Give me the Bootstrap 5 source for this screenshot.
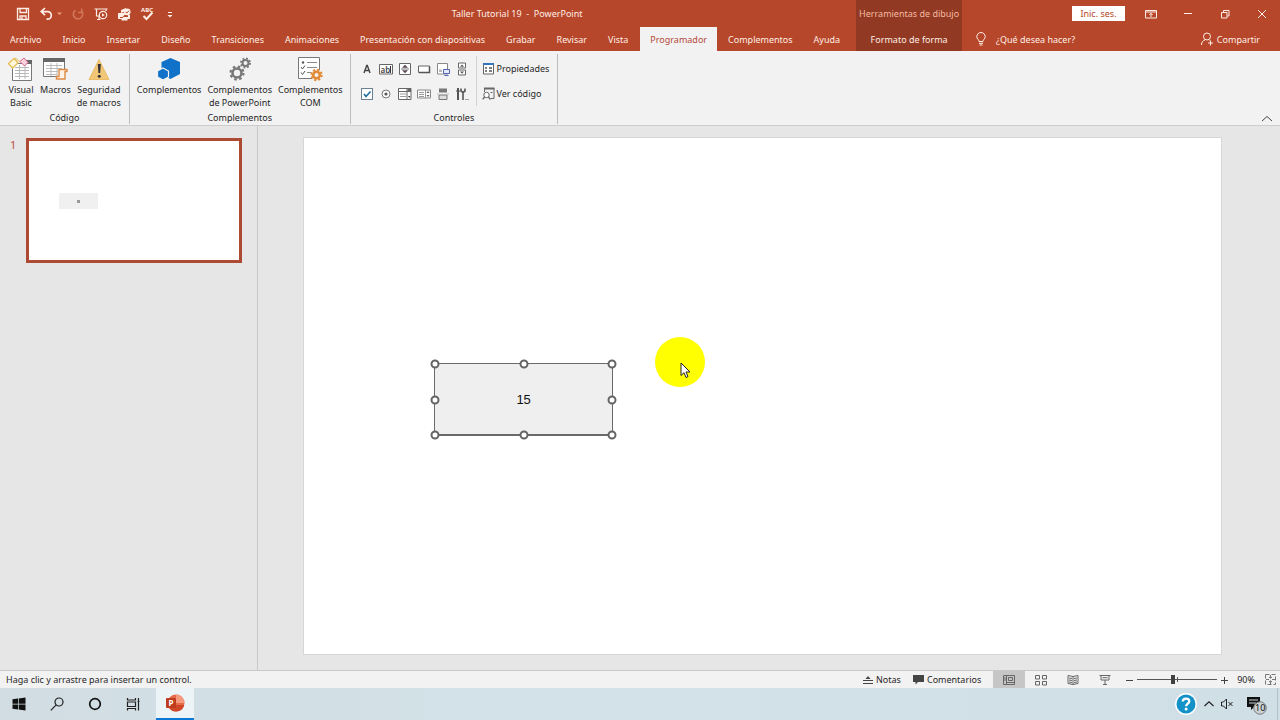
<!DOCTYPE html>
<html lang="es">
<head>
<meta charset="utf-8">
<meta name="viewport" content="width=device-width, initial-scale=1">
<title>Taller Tutorial 19 - PowerPoint</title>
<link href="https://cdn.jsdelivr.net/npm/bootstrap@5.3.0/dist/css/bootstrap.min.css" rel="stylesheet">
<style>
  :root { --brand: #b7472a; --brand-dark: #923923; --panel: #f2f2f2; --desk: #e6e6e6; }
  body { font-family: "Noto Sans", "Open Sans", sans-serif; font-size: 9px; line-height: 13px; color: #262626; background: var(--desk); }
  button, a { font: inherit; line-height: 13px; color: inherit; text-decoration: none; white-space: nowrap; }
  button { border: 0; background: none; padding: 0; }
  svg { display: block; flex: none; }

  .app-head { background: var(--brand); color: #ffeee6; display: grid; grid-template-columns: auto 106px 1fr; grid-template-rows: 27px 24px; }
  .quick-bar { flex: 0 0 178px; gap: 9px; padding-left: 16px; }
  .context-part { background: var(--brand-dark); display: flex; align-items: center; justify-content: center; white-space: nowrap; }
  .context-title { color: #f4b9a2; }
  .sign-in { background: #fff; color: var(--brand); width: 53px; height: 15px; margin-right: 20px; }
  .window-btns { gap: 25px; padding-right: 12px; }
  .tab-row { padding-right: 5px; }
  .ribbon-tab { padding: 0 11px 0 10px; display: flex; align-items: center; }
  .ribbon-tab.is-open { background: var(--panel); color: #b5493a; padding: 0 10px; margin: 0 1px; }

  .ribbon { background: var(--panel); border-bottom: 1px solid #cdcdcd; height: 75px; padding: 3px 0 1px; }
  .ribbon-group { border-right: 1px solid #bcbcbc; display: flex; flex-direction: column; justify-content: space-between; align-items: center; }
  .big-btns { display: flex; align-items: flex-start; gap: 6px; padding: 1px 8px 0; }
  .ribbon-group + .ribbon-group .big-btns { padding: 1px 7px 0; }
  .big-btn { display: flex; flex-direction: column; align-items: center; }
  .controls-row { padding: 2px 8px 0 7px; }
  .control-grid { display: grid; grid-template-columns: repeat(6, 19px); grid-auto-rows: 25px; place-items: center; }
  .control-grid svg, .control-grid label { width: 14px; height: 14px; }
  .check-box { appearance: none; display: block; width: 12px; height: 12px; margin: 1px; border: 1px solid #6b8090; background: #fff; }
  .check-box:checked { background: #fff url("data:image/svg+xml,%3Csvg xmlns='http://www.w3.org/2000/svg' viewBox='0 0 10 10'%3E%3Cpath d='M2 5l2 2.5L8.5 2.5' fill='none' stroke='%231e6ea6' stroke-width='1.6'/%3E%3C/svg%3E") center/10px no-repeat; }
  .side-btns { border-left: 1px solid #d2d2d2; padding-left: 5px; }
  .side-btn { height: 25px; display: flex; align-items: center; gap: 2px; }

  .thumb-pane { width: 258px; border-right: 1px solid #c9c9c9; padding: 12px 15px 12px 10px; gap: 10px; }
  .thumb-num { color: #c0513a; font-size: 11px; }
  .thumb { flex: 1; aspect-ratio: 216 / 125; border: 3px solid #ac4a33; background: #fff; }
  .thumb-shape { left: 14%; top: 44%; width: 19%; height: 13%; background: #f0f0f0; display: grid; place-items: center; }
  .thumb-shape::after { content: ""; width: 3px; height: 3px; background: #999; }
  .slide-pane { padding: 11px 58px 15px 45px; }
  .slide { aspect-ratio: 919 / 518; background: #fff; border: 1px solid #d6d6d6; }
  .shape { left: 14.2%; top: 43.7%; width: 19.5%; height: 14%; background: #efefef; border: 1px solid #6a6a6a; box-shadow: inset 0 -1px #6a6a6a; color: #111; font: 13px/16px "Liberation Sans", Arial, sans-serif; }
  .grip { width: 9px; height: 9px; border: 2px solid #646464; border-radius: 50%; background: #fff; transform: translate(-50%, -50%); }
  .pointer-halo { left: 38.3%; top: 38.6%; width: 50px; height: 50px; border-radius: 50%; background: #ffff00; }
  .pointer-halo svg { position: absolute; left: 25px; top: 25px; }

  .status { height: 18px; background: var(--panel); border-top: 1px solid #c8c8c8; padding-left: 6px; }
  .status-btn { display: flex; align-items: center; gap: 3px; }
  .status-notes { margin-right: 12px; }
  .view-btn { width: 32px; height: 17px; display: grid; place-items: center; color: #666; }
  .view-btn.is-on { background: #c6c6c6; }
  .zoom-range { appearance: none; display: block; width: 80px; height: 11px; margin: 0; background: linear-gradient(#555, #555) center/100% 1px no-repeat, linear-gradient(#555, #555) center/1px 5px no-repeat; }
  .zoom-range::-webkit-slider-thumb { appearance: none; width: 4px; height: 9px; background: #404040; }
  .zoom-range::-moz-range-thumb { width: 4px; height: 9px; border: 0; border-radius: 0; background: #404040; }
  .zoom-value { margin-right: 10px; }

  .taskbar { height: 32px; background: linear-gradient(90deg, #d1dde2, #d3e2e9 45%, #d0dee5); color: #111; }
  .task-btn { width: 38px; height: 32px; display: grid; place-items: center; }
  .task-btn.is-on { background: #edf4f8; border-bottom: 2px solid #0a78d6; }
  .tray { gap: 7px; padding-right: 9px; margin-right: 2px; border-right: 1px solid #b4c1c8; height: 32px; }
  .tray-sound { margin-right: 6px; }
</style>
</head>
<body class="d-flex flex-column min-vh-100">

<header class="app-head">
  <div class="d-flex align-items-center">
    <div class="quick-bar d-flex align-items-center">
      <button type="button" aria-label="Guardar"><svg width="14" height="14" viewBox="0 0 14 14" fill="none" stroke="#ffeee6" stroke-width="1.3"><path d="M1.500 1.500h11v11h-11zM4 1.500v4h6.500v-4M4 12.500V9h6v3.500M6 12V10"/></svg></button>
      <button type="button" class="d-flex align-items-center gap-1" aria-label="Deshacer"><svg width="14" height="14" viewBox="0 0 14 14" fill="none" stroke="#ffeee6" stroke-width="1.7"><path d="M6 1L2.200 4.600 6 8.200M2.500 4.600H8.500a3.500 3.500 0 010 7.600H7.500"/></svg><svg width="5" height="4" viewBox="0 0 5 4"><path d="M0 .5h5L2.500 3z" fill="#ef9d7c"/></svg></button>
      <button type="button" aria-label="Repetir"><svg width="14" height="14" viewBox="0 0 14 14" fill="none" stroke="#cf735a" stroke-width="1.7"><path d="M4.500 3.200A4.700 4.700 0 1010 3.500M7 5.500h3.700V1.500"/></svg></button>
      <button type="button" aria-label="Presentación desde el principio"><svg width="14" height="14" viewBox="0 0 14 14" fill="none" stroke="#ffeee6" stroke-width="1.2"><path d="M.5 2h13M2.500 2v7h2.500M5 9v3.500M3 12.500h3.500M12 2v2"/><circle cx="9" cy="8" r="3.7"/><path d="M8 6.300v3.400L10.700 8z" fill="#ffeee6" stroke="none"/></svg></button>
      <button type="button" aria-label="Impresión rápida"><svg width="14" height="14" viewBox="0 0 14 14" fill="#ffeee6"><path d="M4 6V3l5-2v3zM1 6h7v1.500L5.500 10H11V8h2v4h-2.500v1.500h-6V12H1z"/><circle cx="10.2" cy="4.8" r="3.4"/><path d="M8.600 4.800l1.200 1.300 2.200-2.400" fill="none" stroke="#b7472a"/><path d="M3 10.500h3" stroke="#b7472a"/></svg></button>
      <button type="button" aria-label="Ortografía"><svg width="14" height="14" viewBox="0 0 14 14" fill="none" stroke="#ffeee6"><path d="M3.500 9l3 3 6-6.500" stroke-width="2"/><text x="1" y="5" font-size="6" font-weight="700" fill="#ffeee6" stroke="none">ABC</text></svg></button>
      <button type="button" aria-label="Personalizar barra"><svg width="14" height="14" viewBox="0 0 14 14"><path d="M5 5.500h4" stroke="#ffeee6"/><path d="M4.500 8h5L7 10.500z" fill="#ffeee6"/></svg></button>
    </div>
    <div class="flex-grow-1 text-center text-nowrap">Taller Tutorial 19&nbsp; -&nbsp; PowerPoint</div>
  </div>
  <div class="context-part context-title">Herramientas de dibujo</div>
  <div class="d-flex align-items-center justify-content-end">
    <button type="button" class="sign-in">Inic. ses.</button>
    <div class="window-btns d-flex align-items-center">
      <button type="button" aria-label="Opciones de la cinta"><svg width="12" height="12" viewBox="0 0 12 12" fill="none" stroke="#ffeee6"><path d="M.5 2.500h11v7.500h-11zM.5 4h11M6 9V5.500M4.300 7L6 5.300 7.700 7"/></svg></button>
      <button type="button" aria-label="Minimizar"><svg width="12" height="12" viewBox="0 0 12 12"><path d="M2 5.500h8" stroke="#ffeee6"/></svg></button>
      <button type="button" aria-label="Restaurar"><svg width="12" height="12" viewBox="0 0 12 12" fill="none" stroke="#ffeee6"><path d="M2.500 4.500h5.500v5.500h-5.500zM4.500 4V2.500h5.500V8H8.500"/></svg></button>
      <button type="button" aria-label="Cerrar"><svg width="12" height="12" viewBox="0 0 12 12" stroke="#ffeee6"><path d="M2 2l8 8M10 2l-8 8"/></svg></button>
    </div>
  </div>
  <nav class="tab-row d-flex">
    <a href="#" class="ribbon-tab">Archivo</a>
    <a href="#" class="ribbon-tab">Inicio</a>
    <a href="#" class="ribbon-tab">Insertar</a>
    <a href="#" class="ribbon-tab">Diseño</a>
    <a href="#" class="ribbon-tab">Transiciones</a>
    <a href="#" class="ribbon-tab">Animaciones</a>
    <a href="#" class="ribbon-tab">Presentación con diapositivas</a>
    <a href="#" class="ribbon-tab">Grabar</a>
    <a href="#" class="ribbon-tab">Revisar</a>
    <a href="#" class="ribbon-tab">Vista</a>
    <a href="#" class="ribbon-tab is-open" aria-current="page">Programador</a>
    <a href="#" class="ribbon-tab">Complementos</a>
    <a href="#" class="ribbon-tab">Ayuda</a>
  </nav>
  <a href="#" class="context-part">Formato de forma</a>
  <div class="d-flex justify-content-between">
    <button type="button" class="d-flex align-items-center ps-2 ms-1 gap-2"><svg width="14" height="14" viewBox="0 0 14 14" fill="none" stroke="#ffeee6"><path d="M5 9.500C5 7.500 2.800 7 2.800 4.700a4.200 4.200 0 018.400 0C11.200 7 9 7.500 9 9.500zM5 11.300h4M5.500 13h3"/></svg>¿Qué desea hacer?</button>
    <button type="button" class="d-flex align-items-center me-3 pe-1 gap-1"><svg width="12" height="14" viewBox="0 0 12 14" fill="none" stroke="#ffeee6"><circle cx="6" cy="4.5" r="3.5"/><path d="M.5 13c0-3 1.500-4.500 3.500-5M7.500 7.700l1 .8M9.500 8.500v5M7 11h5"/></svg>Compartir</button>
  </div>
</header>

<section class="ribbon d-flex" aria-label="Programador">
  <div class="ribbon-group">
    <div class="big-btns">
      <button type="button" class="big-btn"><svg width="26" height="28" viewBox="0 0 26 28"><path d="M4.500 8.500h19v17h-19z" fill="#fff" stroke="#777"/><path d="M16 5h8v4h-8z" fill="#666"/><path d="M7 12.500h14M7 15.500h14M7 18.500h14M7 21.500h14M11.500 10v14M17 10v14" stroke="#b8b8b8"/><path d="M.5 8.500l5.500-5 4 4.500-5.500 5z" fill="#fff7dd" stroke="#e5bd55" stroke-width="1.3"/><path d="M12 6.500l4-3.500 4 4.500-3.500 3.500z" fill="#f8d4df" stroke="#d8648a"/><path d="M7 3l5 3.500" stroke="#e5bd55"/></svg><span>Visual<br>Basic</span></button>
      <button type="button" class="big-btn"><svg width="26" height="28" viewBox="0 0 26 28"><path d="M1.500 3.500h21v18h-21z" fill="#fff" stroke="#777"/><path d="M1 3h22v4H1z" fill="#666"/><path d="M4 10.500h16M4 13.500h16M4 16.500h12M4 19.500h11M9 8v13M15 8v13" stroke="#bbb"/><path d="M17 14.500h8v2h-2V24h-8.500v-2.500H17z" fill="#fff2e6" stroke="#df8b45" stroke-width="1.4"/></svg><span>Macros</span></button>
      <button type="button" class="big-btn"><svg width="26" height="28" viewBox="0 0 26 28"><path d="M13 4.500L23 24.500H3z" fill="#f1c777" stroke="#e9bd69" stroke-linejoin="round"/><path d="M11.800 9h3l-.6 9h-1.800z" fill="#333"/><circle cx="13.3" cy="21.3" r="1.5" fill="#333"/></svg><span>Seguridad<br>de macros</span></button>
    </div>
    <div>Código</div>
  </div>
  <div class="ribbon-group">
    <div class="big-btns">
      <button type="button" class="big-btn"><svg width="26" height="28" viewBox="0 0 26 28" fill="#0f72c8"><path d="M14.500 3l9.500 4v12l-9.500 5-9-5V7z"/><path d="M7 13l5.500 3v6L7 25l-5.500-3v-6z" stroke="#f2f2f2" stroke-width="1.2"/></svg><span>Complementos</span></button>
      <button type="button" class="big-btn"><svg width="26" height="28" viewBox="0 0 26 28" fill="none" stroke="#787878"><circle cx="10" cy="18" r="4.5" stroke-width="2.6"/><circle cx="10" cy="18" r="6.5" stroke-width="2.2" stroke-dasharray="2.550 2.550"/><circle cx="18.500" cy="8" r="3" stroke-width="2"/><circle cx="18.500" cy="8" r="4.600" stroke-width="1.800" stroke-dasharray="1.800 1.810"/></svg><span>Complementos<br>de PowerPoint</span></button>
      <button type="button" class="big-btn"><svg width="26" height="28" viewBox="0 0 26 28" fill="none"><path d="M1.500 2.500h21v21h-21z" fill="#fff" stroke="#777"/><path d="M10 7.500h10M10 12.500h10M10 17.500h5" stroke="#888"/><circle cx="6" cy="7.5" r="1.2" fill="#555"/><path d="M4 12l1.500 2L8 10.500M4 17.500l1.500 2L8 16" stroke="#555"/><circle cx="19.5" cy="20" r="5.8" fill="#f2f2f2"/><circle cx="19.5" cy="20" r="3.3" stroke="#e38a35" stroke-width="2.6"/><circle cx="19.5" cy="20" r="5.2" stroke="#e38a35" stroke-width="2" stroke-dasharray="2.100 1.980"/></svg><span>Complementos<br>COM</span></button>
    </div>
    <div>Complementos</div>
  </div>
  <div class="ribbon-group">
    <div class="controls-row d-flex">
      <div class="control-grid pe-1">
        <button type="button" aria-label="Etiqueta"><svg viewBox="0 0 14 14" fill="none" stroke="#444" stroke-width="1.4"><path d="M4 11L6.700 3.500h.6L10 11M5 8.500h4"/></svg></button>
        <button type="button" aria-label="Cuadro de texto"><svg viewBox="0 0 14 14"><path d="M.5 2.500h13v9.500H.5z" fill="#fff" stroke="#666"/><text x="1.5" y="10.5" font-size="8" font-weight="600" fill="#444">ab</text><path d="M11.500 4v7" stroke="#333"/></svg></button>
        <button type="button" aria-label="Botón de número"><svg viewBox="0 0 14 14"><path d="M1.500 1.500h11v11h-11z" fill="#fff" stroke="#666"/><path d="M3 7h8" stroke="#777"/><path d="M4 5.800h6L7 2.700zM4 8.200h6L7 11.300z" fill="#5b4a58"/></svg></button>
        <button type="button" aria-label="Botón de comando"><svg viewBox="0 0 14 14"><path d="M1.500 4h11v6.500h-11z" fill="#fff" stroke="#666"/><path d="M2 10.500h10.500V4.500" fill="none" stroke="#555" stroke-width="1.5"/></svg></button>
        <button type="button" aria-label="Imagen"><svg viewBox="0 0 14 14"><path d="M1.500 1.500h10v10.500h-10z" fill="#fff" stroke="#888"/><path d="M3 10V7.500h3V10z" fill="#bbb"/><path d="M7.500 7.500h6v4h-6z" fill="#e4ebff" stroke="#5265b5"/><path d="M8.500 13.500h4" stroke="#5265b5"/></svg></button>
        <button type="button" aria-label="Barra de desplazamiento"><svg viewBox="0 0 14 14"><path d="M3.500 1h7v5h-7zM3.500 8h7v5h-7z" fill="#fff" stroke="#666"/><path d="M5 4.800h4L7 2.500zM5 9.500h4L7 11.800z" fill="#555"/></svg></button>
        <label aria-label="Casilla"><input type="checkbox" class="check-box" aria-label="Casilla" checked></label>
        <button type="button" aria-label="Botón de opción"><svg viewBox="0 0 14 14"><circle cx="7" cy="7" r="4" fill="#fff" stroke="#777"/><circle cx="7" cy="7" r="1.6" fill="#555"/></svg></button>
        <button type="button" aria-label="Cuadro combinado"><svg viewBox="0 0 14 14"><path d="M.5 1.500h12.500v11H.5z" fill="#fff" stroke="#666"/><path d="M9 1.500v11M1 4.500h12" stroke="#666"/><path d="M2 7h6M2 9.500h6" stroke="#999"/><path d="M9.500 2h3.500v3H9.500z" fill="#666"/><path d="M10 9h2.500L11.200 11z" fill="#444"/></svg></button>
        <button type="button" aria-label="Cuadro de lista"><svg viewBox="0 0 14 14"><path d="M.5 3h13v8H.5z" fill="#fff" stroke="#888"/><path d="M8.500 3v8M2 5.500h5M2 7.500h5M2 9.500h5" stroke="#999"/><path d="M9.500 6h3L11 4zM9.500 8h3L11 10z" fill="#666"/></svg></button>
        <button type="button" aria-label="Botón de alternar"><svg viewBox="0 0 14 14"><path d="M3 1.500h8v4H3z" fill="#777"/><path d="M3 8h8v4.500H3z" fill="#ddd" stroke="#777"/><path d="M1.500 7h1M11.500 7h1" stroke="#888"/></svg></button>
        <button type="button" aria-label="Más controles"><svg viewBox="0 0 14 14" fill="none" stroke="#555"><path d="M3 1v5M3 6v7" stroke-width="2"/><path d="M1 4h4"/><path d="M6 1.500v2.500l2 1.500 2-1.500V1.500M8 5.500V13" stroke-width="1.6"/><path d="M10.500 12.500h3" stroke-dasharray="1 1"/></svg></button>
      </div>
      <div class="side-btns">
        <button type="button" class="side-btn"><svg width="13" height="13" viewBox="0 0 13 13"><path d="M1.500 1.500h10v10.500h-10z" fill="#fff" stroke="#666"/><path d="M1 1h11v2H1z" fill="#3375b5"/><path d="M3 6h2M3 9h2M7 6h3M7 9h3" stroke="#555" stroke-width="1.3"/></svg>Propiedades</button>
        <button type="button" class="side-btn"><svg width="13" height="13" viewBox="0 0 13 13" fill="none" stroke="#666"><path d="M2.500 5V1.500h9.500v10H9"/><path d="M2 1.500h10.500" stroke-width="2"/><circle cx="4.5" cy="8" r="2.7" fill="#fff"/><path d="M2.700 10L.7 12.300M6.500 10l2 2.500" stroke-width="1.3"/><path d="M8.500 5.500h2"/></svg>Ver código</button>
      </div>
    </div>
    <div>Controles</div>
  </div>
  <button type="button" class="ms-auto align-self-end me-2" aria-label="Contraer la cinta"><svg width="10" height="10" viewBox="0 0 10 10" fill="none" stroke="#444"><path d="M0 7l5-4.500L10 7"/></svg></button>
</section>

<main class="d-flex flex-grow-1">
  <aside class="thumb-pane d-flex align-items-start flex-shrink-0">
    <span class="thumb-num">1</span>
    <div class="thumb position-relative"><div class="thumb-shape position-absolute"></div></div>
  </aside>
  <div class="slide-pane flex-grow-1">
    <div class="slide position-relative">
      <button type="button" class="shape position-absolute">15
        <span class="grip position-absolute start-0 top-0"></span>
        <span class="grip position-absolute start-50 top-0"></span>
        <span class="grip position-absolute start-100 top-0"></span>
        <span class="grip position-absolute start-0 top-50"></span>
        <span class="grip position-absolute start-100 top-50"></span>
        <span class="grip position-absolute start-0 top-100"></span>
        <span class="grip position-absolute start-50 top-100"></span>
        <span class="grip position-absolute start-100 top-100"></span>
      </button>
      <div class="pointer-halo position-absolute"><svg width="11" height="17" viewBox="0 0 11 17"><path d="M1 1v12.500l3-2.800 2 4.800 2-.9-2-4.600h4z" fill="#fff" stroke="#222"/></svg></div>
    </div>
  </div>
</main>

<footer>
  <div class="status d-flex align-items-center">
    <span class="me-auto text-nowrap">Haga clic y arrastre para insertar un control.</span>
    <button type="button" class="status-btn status-notes"><svg width="10" height="10" viewBox="0 0 10 10"><path d="M0 5.500h10M0 8.500h10" stroke="#444"/><path d="M2.500 4L5 1l2.500 3z" fill="#444"/></svg>Notas</button>
    <button type="button" class="status-btn status-notes"><svg width="11" height="11" viewBox="0 0 11 11"><path d="M0 1h11v7H5L2.500 10.500V8H0z" fill="#444"/></svg>Comentarios</button>
    <button type="button" class="view-btn is-on" aria-label="Normal"><svg width="12" height="12" viewBox="0 0 12 12" fill="none" stroke="currentColor"><path d="M.5 1.500h11v9H.5zM3.500 1.500v9M3.500 8.500h8M5.500 3.500h4v3h-4zM1 4h2M1 6h2"/></svg></button>
    <button type="button" class="view-btn" aria-label="Clasificador"><svg width="12" height="12" viewBox="0 0 12 12" fill="none" stroke="currentColor"><path d="M.5 1.500h4v3.500h-4zM7.500 1.500h4v3.500h-4zM.5 7.500h4V11h-4zM7.500 7.500h4V11h-4z"/></svg></button>
    <button type="button" class="view-btn" aria-label="Lectura"><svg width="12" height="12" viewBox="0 0 12 12" fill="none" stroke="currentColor"><path d="M6 2.500L1 1.500v8l5 1 5-1v-8zM6 2.500v8M2 4l3 .5M2 6l3 .5M2 8l3 .5M7 4.500L10 4M7 6.500L10 6M7 8.500L10 8"/></svg></button>
    <button type="button" class="view-btn" aria-label="Presentación"><svg width="12" height="12" viewBox="0 0 12 12" fill="none" stroke="currentColor"><path d="M.5 1.500h11M2 1.500v4.500h8V1.500M3.500 3.700h5M6 6v4.500M4 10.500h4"/></svg></button>
    <button type="button" class="ms-1 me-1" aria-label="Alejar"><svg width="8" height="8" viewBox="0 0 8 8"><path d="M1 4.500h7" stroke="#444"/></svg></button>
    <input type="range" class="zoom-range" min="10" max="190" value="90" aria-label="Zoom">
    <button type="button" class="ms-1 me-2" aria-label="Acercar"><svg width="8" height="8" viewBox="0 0 8 8"><path d="M0 4.500h7M3.500 1v7" stroke="#444"/></svg></button>
    <button type="button" class="zoom-value">90%</button>
    <button type="button" class="me-1" aria-label="Ajustar a la ventana"><svg width="11" height="11" viewBox="0 0 11 11" fill="none" stroke="#777"><path d="M.5 .5h10v10H.5z" stroke-dasharray="4 2"/><path d="M5.500 1v3M4 3l1.500 1.200L7 3M5.500 10V7M4 8l1.500-1.200L7 8M1 5.500h3M10 5.500H7"/></svg></button>
  </div>
  <div class="taskbar d-flex align-items-center">
    <button type="button" class="task-btn" aria-label="Inicio de Windows"><svg width="14" height="14" viewBox="0 0 14 14" fill="#111"><path d="M.5 2.300L6 1.500v5.200H.5zM6.700 1.400L13.500.5v6.200H6.700zM.5 7.400H6v5.200l-5.500-.8zM6.700 7.400h6.800v6.200l-6.800-1z"/></svg></button>
    <button type="button" class="task-btn" aria-label="Buscar"><svg width="14" height="14" viewBox="0 0 14 14" fill="none" stroke="#222" stroke-width="1.2"><circle cx="9" cy="5" r="4"/><path d="M6.200 7.900L.8 13.400"/></svg></button>
    <button type="button" class="task-btn" aria-label="Cortana"><svg width="14" height="14" viewBox="0 0 14 14"><circle cx="7" cy="7" r="5.3" fill="none" stroke="#111" stroke-width="1.7"/></svg></button>
    <button type="button" class="task-btn" aria-label="Vista de tareas"><svg width="14" height="14" viewBox="0 0 14 14" fill="none" stroke="#222"><path d="M1.500 1v2h8V1M1.500 5h8v4.500h-8zM1.500 13.500v-2h8v2M12.500 1v12.500M11.500 4.500h2" stroke-width="1.2"/></svg></button>
    <button type="button" class="task-btn is-on ms-1" aria-label="PowerPoint"><svg width="20" height="18" viewBox="0 0 20 18"><circle cx="11" cy="9" r="8.5" fill="#e8694a"/><path d="M11 .5A8.500 8.500 0 0119.500 9H11z" fill="#f69a7f"/><path d="M3 11h16.200A8.500 8.500 0 013 12z" fill="#cf4727"/><rect x="1" y="4" width="10" height="10" rx="1" fill="#bf3b1e"/><text x="3.5" y="12" font-size="8" font-weight="700" fill="#fff">P</text></svg></button>
    <div class="tray d-flex align-items-center ms-auto">
      <button type="button" aria-label="Ayuda"><svg width="22" height="22" viewBox="0 0 22 22"><circle cx="11" cy="11" r="11" fill="#fff"/><circle cx="11" cy="11" r="9.5" fill="#1492c8"/><path d="M7.800 8.500C7.800 4.500 14.300 4.700 14.300 8.300c0 2.300-3.200 2.500-3.200 5" fill="none" stroke="#fff" stroke-width="2.3"/><circle cx="11.1" cy="16" r="1.5" fill="#fff"/></svg></button>
      <button type="button" aria-label="Iconos ocultos"><svg width="10" height="10" viewBox="0 0 10 10" fill="none" stroke="#222" stroke-width="1.2"><path d="M.5 7L5 2.800 9.500 7"/></svg></button>
      <button type="button" class="tray-sound" aria-label="Volumen"><svg width="12" height="12" viewBox="0 0 12 12" fill="none" stroke="#222"><path d="M.5 4h2L5.500 1v10L2.500 8h-2zM7.500 4l4 4M11.500 4l-4 4"/></svg></button>
      <button type="button" aria-label="Notificaciones, 10"><svg width="22" height="22" viewBox="0 0 22 22"><path d="M1 4h13v10H8l-3 3v-3H1z" fill="#111"/><path d="M3 7h9M3 10h7" stroke="#c8d4da"/><circle cx="14" cy="15" r="6.2" fill="#ccd3d7" stroke="#777"/><text x="9" y="18" font-size="9" fill="#111">10</text></svg></button>
    </div>
  </div>
</footer>
<script src="https://cdn.jsdelivr.net/npm/bootstrap@5.3.0/dist/js/bootstrap.bundle.min.js"></script>
</body>
</html>
